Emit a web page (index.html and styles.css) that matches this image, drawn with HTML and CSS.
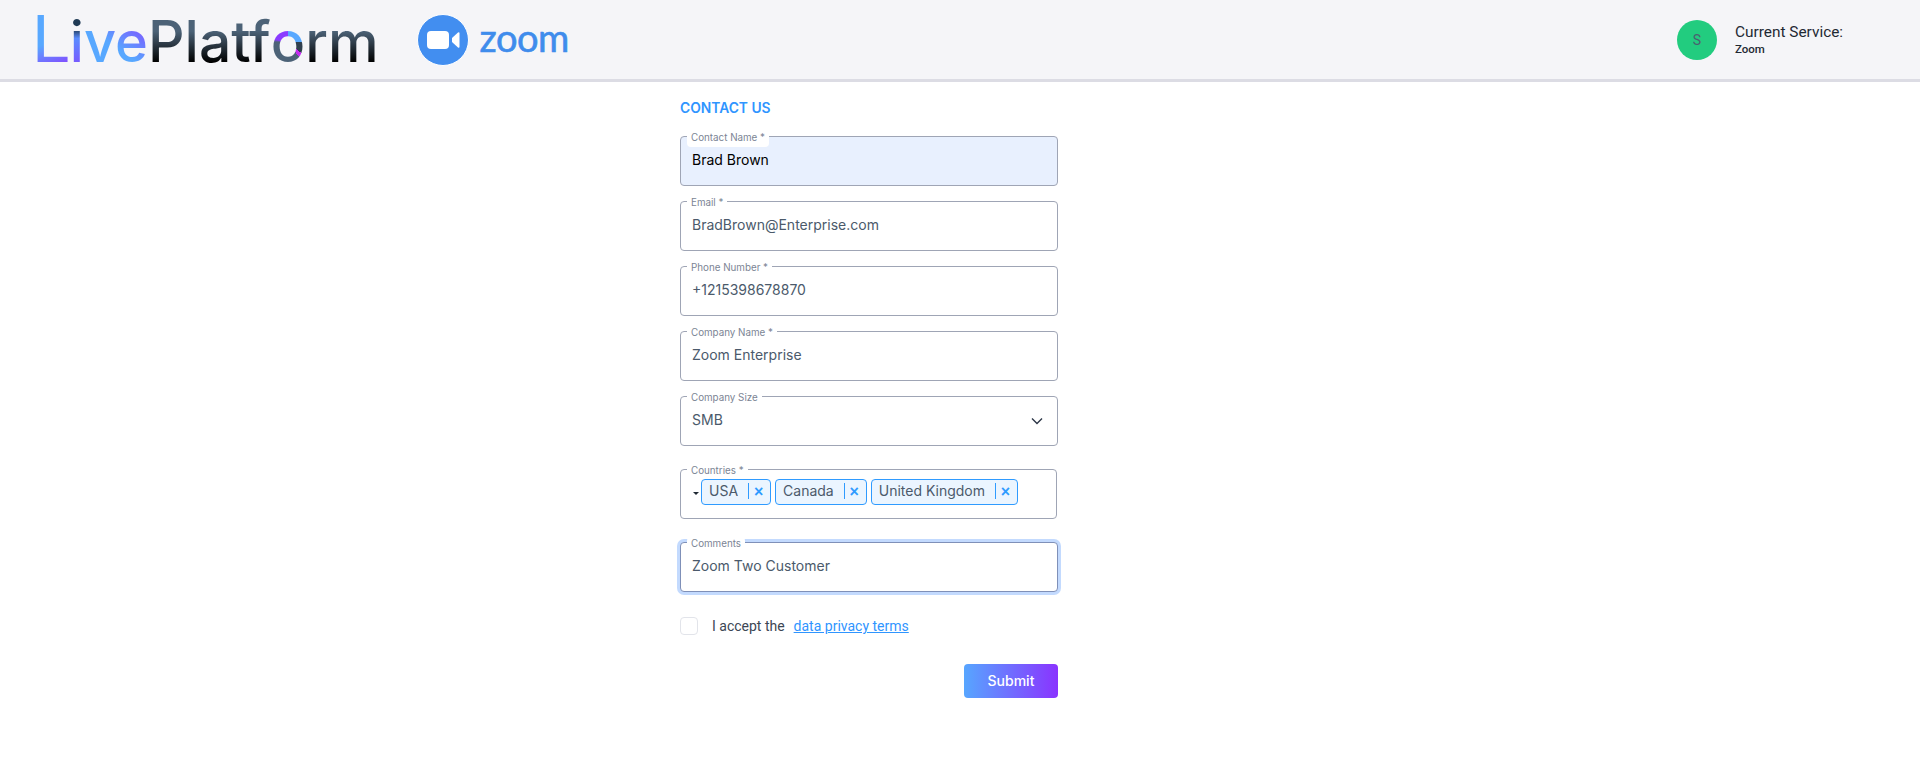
FILE: index.html
```html
<!DOCTYPE html>
<html lang="en">
<head>
<meta charset="utf-8">
<title>Contact Us</title>
<link rel="stylesheet" href="styles.css">
</head>
<body>
<header class="topbar">
  <div class="brand">
    <div class="logo">
      <span class="live-l">L</span><span class="live-i">i</span><span class="live-ve">ve</span><span class="plat">Platf</span><span class="plat-o">o</span><span class="plat">rm</span>
    </div>
    <svg class="zoom-icon" width="52" height="52" viewBox="0 0 52 52" aria-hidden="true">
      <circle cx="26" cy="26" r="25.5" fill="#428ef0" stroke="#fff" stroke-width="1"/>
      <rect x="10" y="17" width="22" height="18" rx="4" fill="#fff"/>
      <path d="M35 24 L41 18.5 Q42.500 17.500 42.500 19.500 V32.500 Q42.500 34.500 41 33.500 L35 28 Z" fill="#fff"/>
    </svg>
    <span class="zoom-word">zoom</span>
  </div>
  <div class="service">
    <div class="avatar">S</div>
    <div class="service-text">
      <div class="service-title">Current Service:</div>
      <div class="service-name">Zoom</div>
    </div>
  </div>
</header>

<main class="page">
  <h1 class="title">CONTACT US</h1>
  <form class="form">
    <div class="field autofill"><span class="label label-fill">Contact Name *</span><span class="value">Brad Brown</span></div>
    <div class="field"><span class="label">Email *</span><span class="value">BradBrown@Enterprise.com</span></div>
    <div class="field"><span class="label">Phone Number *</span><span class="value">+1215398678870</span></div>
    <div class="field"><span class="label">Company Name *</span><span class="value">Zoom Enterprise</span></div>
    <div class="field select"><span class="label">Company Size</span><span class="value">SMB</span>
      <svg class="chevron" width="14" height="8" viewBox="0 0 14 8" aria-hidden="true"><path d="M2 1.500 L7 6.500 L12 1.500" fill="none" stroke="#2d3748" stroke-width="1.400"/></svg>
    </div>
    <div class="field chips-field"><span class="label">Countries *</span>
      <span class="caret"></span>
      <span class="chip"><span class="chip-text">USA</span><span class="chip-x">×</span></span>
      <span class="chip"><span class="chip-text">Canada</span><span class="chip-x">×</span></span>
      <span class="chip"><span class="chip-text">United Kingdom</span><span class="chip-x">×</span></span>
    </div>
    <div class="field focused"><span class="label">Comments</span><span class="value">Zoom Two Customer</span></div>
    <div class="terms">
      <span class="checkbox"></span>
      <span class="terms-text">I accept the</span>
      <a class="terms-link" href="#">data privacy terms</a>
    </div>
    <div class="actions"><button class="submit" type="button">Submit</button></div>
  </form>
</main>
</body>
</html>
```
FILE: styles.css
```css
* { box-sizing: border-box; }
html, body { margin: 0; height: 100%; }
body { background: #fff; font-family: "Inter", sans-serif; overflow: hidden; }

.topbar {
  height: 82px;
  background: #f5f5f8;
  border-bottom: 3px solid #dcdce4;
  display: flex;
  justify-content: space-between;
  align-items: center;
  padding: 0 76px 0 32px;
}
.brand { display: flex; align-items: center; }
.logo {
  display: flex;
  align-items: baseline;
  height: 79px;
  padding-top: 5px;
  line-height: 72px;
  white-space: nowrap;
  font-family: "Inter", sans-serif;
}
.live-l, .live-i, .live-ve, .plat, .plat-o {
  display: inline-block;
  -webkit-background-clip: text;
  background-clip: text;
  color: transparent;
}
.live-l {
  font-family: "Liberation Sans", sans-serif;
  font-size: 68px;
  font-weight: 400;
  line-height: 66px;
  background-image: linear-gradient(160deg, #58a8ff 55%, #8a3bff 95%);
}
.live-i {
  font-size: 56px;
  font-weight: 500;
  background-image: linear-gradient(180deg, #1f3a55 32%, #5a8cff 45%, #8a3bff 100%);
}
.live-ve {
  font-size: 56px;
  font-weight: 500;
  background-image: linear-gradient(35deg, #58a8ff 45%, #8a3bff 90%);
}
.plat, .plat-o { font-size: 57px; font-weight: 500; }
.plat { background-image: linear-gradient(180deg, #4c6277 35%, #000 78%); }
.plat-o { background-image: conic-gradient(#58a8ff 0 25%, #30404f 25% 36%, #c42bf0 36% 40%, #4c6277 40% 75%, #8a3bff 78% 100%); }
.zoom-icon { margin-left: 38px; }
.zoom-word {
  margin-left: 11px;
  font-family: "Lato", sans-serif;
  font-size: 38px;
  letter-spacing: -0.5px;
  color: #3f8cec;
  -webkit-text-stroke: 0.6px #3f8cec;
  line-height: 1;
  position: relative;
  top: -3px;
}

.service { display: flex; align-items: center; gap: 18px; width: 167px; }
.avatar {
  width: 40px;
  height: 40px;
  border-radius: 50%;
  background: #22cc7f;
  color: #4b6070;
  font-family: "Roboto", sans-serif;
  font-size: 14px;
  display: flex;
  align-items: center;
  justify-content: center;
}
.service-title {
  font-family: "Roboto", sans-serif;
  font-size: 15.400px;
  line-height: 18px;
  color: #1f2933;
}
.service-name {
  font-family: "Roboto", sans-serif;
  font-size: 11.500px;
  font-weight: 500;
  line-height: 14px;
  margin-top: 1px;
  color: #1f2933;
}

.page { padding: 17px 0 0 680px; }
.title {
  margin: 0 0 19px;
  height: 18px;
  font-size: 13.800px;
  line-height: 18px;
  font-weight: 600;
  color: #2f95ff;
}
.form { width: 378px; display: flex; flex-direction: column; }
.field {
  position: relative;
  height: 50px;
  margin-bottom: 15px;
  padding: 0 11px;
  border: 1px solid #9fa5b5;
  border-radius: 4px;
  background: #fff;
  display: flex;
  align-items: center;
}
.label {
  position: absolute;
  left: 6px;
  top: -6px;
  height: 12px;
  padding: 0 4px;
  background: #fff;
  border-radius: 4px;
  font-size: 9.800px;
  line-height: 14px;
  color: #7b8494;
  white-space: nowrap;
}
.label-fill { height: 16px; }
.value {
  font-size: 14px;
  line-height: 18px;
  color: #4b5a6b;
  position: relative;
  top: -1px;
}
.autofill { background: #e8f0fe; }
.autofill .value { color: #000; }
.select { justify-content: space-between; margin-bottom: 23px; }
.chevron { margin-right: 2px; }
.chips-field {
  width: 377px;
  margin-bottom: 23px;
  padding: 0 0 4px 12px;
  gap: 4px;
}
.caret {
  width: 0;
  height: 0;
  border-left: 3px solid transparent;
  border-right: 3px solid transparent;
  border-top: 3px solid #1f2933;
  margin-right: -2px;
  margin-top: 2px;
}
.chip {
  height: 26px;
  padding: 0 5px 2px 7px;
  border: 1px solid #2f9bff;
  border-radius: 4px;
  background: #ebf5ff;
  display: inline-flex;
  align-items: center;
  font-size: 14px;
  color: #4b5a6b;
}
.chip-text { padding-right: 10px; line-height: 16px; }
.chip-x {
  width: 17px;
  height: 16px;
  border-left: 1px solid #2f9bff;
  color: #2f9bff;
  font-family: "Liberation Sans", sans-serif;
  font-size: 16px;
  font-weight: 700;
  line-height: 17px;
  text-align: center;
  padding-left: 3px;
}
.focused {
  border-color: #7f90b8;
  box-shadow: 0 0 0 3px #c3dafe;
  margin-bottom: 25px;
}
.terms {
  display: flex;
  align-items: center;
  height: 18px;
  margin-bottom: 29px;
  font-family: "Roboto", sans-serif;
  font-size: 14px;
}
.checkbox {
  width: 18px;
  height: 18px;
  border: 1px solid #e2e4ea;
  border-radius: 4px;
  background: #fff;
  margin-right: 14px;
}
.terms-text { color: #3c4654; margin-right: 9px; }
.terms-link { color: #2f95ff; text-decoration: underline; }
.actions { display: flex; justify-content: flex-end; }
.submit {
  width: 94px;
  height: 34px;
  padding: 0 0 2px;
  border: 0;
  border-radius: 4px;
  background: linear-gradient(90deg, #57a6ff, #8a33ff);
  color: #fff;
  font-family: "Inter", sans-serif;
  font-size: 14px;
  font-weight: 500;
}
```
